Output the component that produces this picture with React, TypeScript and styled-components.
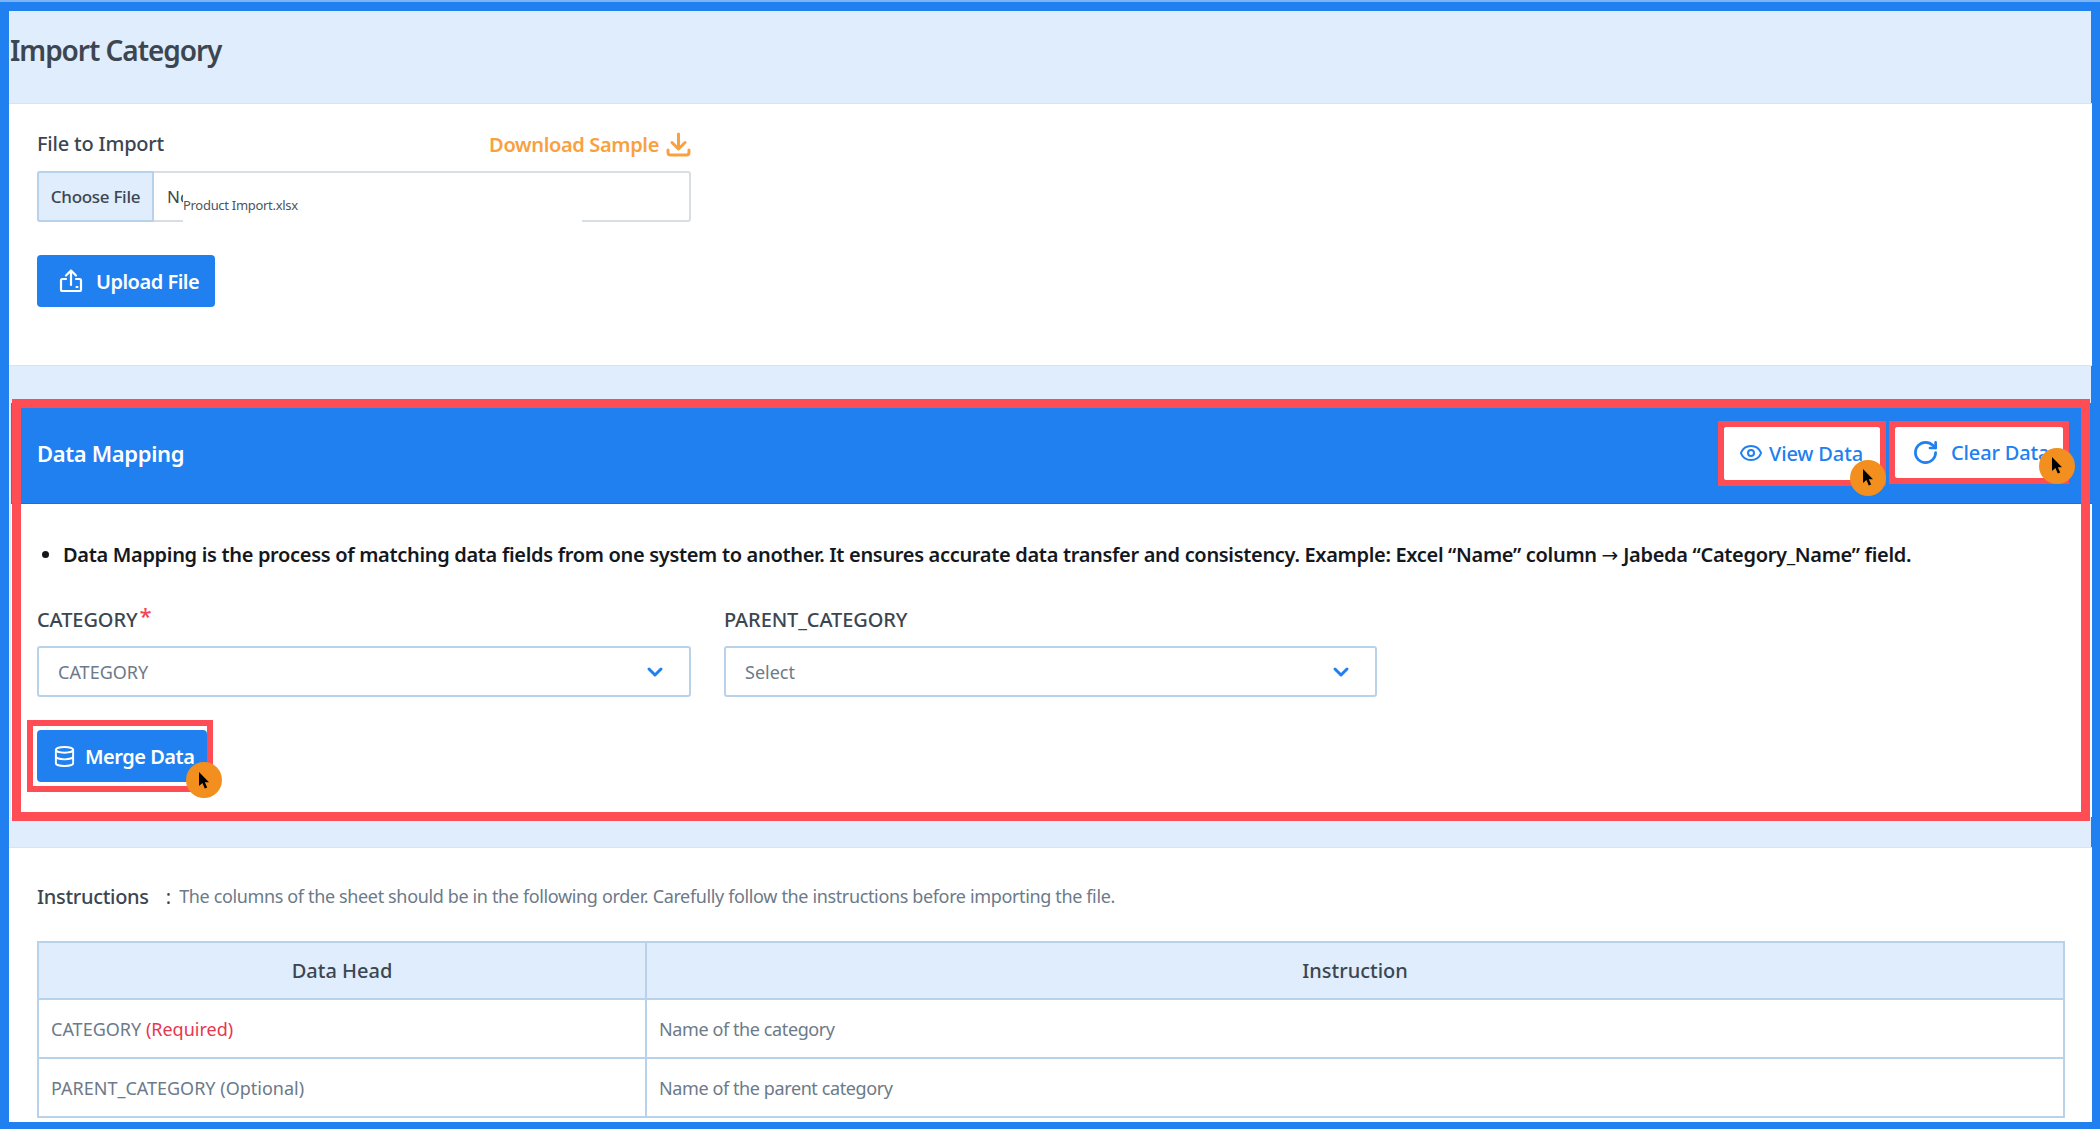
import React from 'react';
import styled, { createGlobalStyle } from 'styled-components';
import { ChevronDown, Database, Eye, RotateCw } from 'lucide-react';

const GlobalStyle = createGlobalStyle`
  html, body {
    margin: 0;
    padding: 0;
    background: #2080f0;
  }
  * {
    box-sizing: border-box;
  }
  body {
    font-family: "Noto Sans", "Open Sans", sans-serif;
    color: #3c4651;
  }
`;

const palette = {
  blue: '#2080f0',
  pale: '#e0edfc',
  ink: '#3c4651',
  muted: '#6c7a89',
  line: '#b9d2ec',
  grey: '#d8dee6',
  red: '#ff4d55',
  orange: '#f28f1f',
  amber: '#f9a03f',
};

const Frame = styled.div`
  width: 2100px;
  height: 1129px;
  overflow: hidden;
  background: ${palette.blue};
  border-top: 2px solid #7db4f6;
  padding: 9px 9px 7px;
`;

const Page = styled.main`
  height: 1111px;
  background: ${palette.pale};
  display: flex;
  flex-direction: column;
`;

const PageHeader = styled.header`
  height: 92px;
  flex: none;
  display: flex;
  align-items: center;
  padding: 0 0 14px 1px;
`;

const Title = styled.h1`
  margin: 0;
  font-size: 28px;
  line-height: 36px;
  font-weight: 600;
  letter-spacing: -1.05px;
  color: ${palette.ink};
`;

const Card = styled.section`
  flex: none;
  background: #fff;
  border-top: 1px solid #dce3ea;
  border-bottom: 1px solid #dce3ea;
  margin-right: -1px;
  padding: 24px 28px 58px;
`;

const InstructionsCard = styled(Card)`
  margin-top: 30px;
  padding: 33px 28px 0;
  border-bottom: none;
  flex: 1;
`;

const Narrow = styled.div`
  width: 654px;
`;

const LabelRow = styled.div`
  display: flex;
  justify-content: space-between;
  align-items: center;
  height: 32px;
  margin-bottom: 11px;
`;

const FieldLabel = styled.label`
  display: block;
  font-size: 20px;
  line-height: 28px;
  font-weight: 500;
  letter-spacing: -0.1px;
  color: ${palette.ink};
  margin-bottom: 12px;
`;

const PlainLabel = styled(FieldLabel)`
  margin: 0;
  letter-spacing: -0.2px;
`;

const RequiredMark = styled.span`
  color: #f0455a;
  font-size: 22px;
  line-height: 0;
  margin-left: 2px;
  vertical-align: 3px;
`;

const DownloadLink = styled.a`
  display: flex;
  align-items: center;
  gap: 7px;
  font-size: 20px;
  font-weight: 600;
  letter-spacing: -0.35px;
  color: ${palette.amber};
`;

const FileBox = styled.div`
  position: relative;
  display: flex;
  align-items: center;
  height: 51px;
  border: 2px solid ${palette.grey};
  border-radius: 3px;
  background: #fff;
  font-size: 17px;
  color: ${palette.ink};
`;

const ChooseFile = styled.span`
  align-self: stretch;
  width: 117px;
  margin: -2px 0 -2px -2px;
  display: flex;
  align-items: center;
  justify-content: center;
  background: ${palette.pale};
  border: 2px solid ${palette.line};
  border-radius: 3px 0 0 3px;
  font-weight: 500;
  letter-spacing: -0.3px;
`;

const NoFile = styled.span`
  margin-left: 13px;
`;

const FilePatch = styled.span`
  position: absolute;
  top: 0;
  bottom: -2px;
  left: 144px;
  right: 107px;
  background: #fff;
  display: flex;
  align-items: center;
  padding-top: 14px;
  font-size: 13px;
  letter-spacing: -0.3px;
  color: #4a5560;
`;

const PrimaryButton = styled.button<{ $width: number; $gap: number; $pad: number }>`
  position: relative;
  display: flex;
  align-items: center;
  gap: ${(props) => props.$gap}px;
  width: ${(props) => props.$width}px;
  height: 52px;
  margin-top: 33px;
  padding: 0 0 0 ${(props) => props.$pad}px;
  border: none;
  border-radius: 4px;
  background: ${palette.blue};
  color: #fff;
  font-family: inherit;
  font-size: 20px;
  font-weight: 600;
  letter-spacing: -0.5px;
`;

const MappingCard = styled.section`
  position: relative;
  flex: none;
  margin: 37px -1px 0 2px;
  background: #fff;
`;

const MappingHeader = styled.div`
  height: 101px;
  background: ${palette.blue};
  display: flex;
  align-items: center;
  justify-content: space-between;
  padding: 0 29px 0 26px;
  border-bottom: 1px solid #1a6fd6;
`;

const MappingTitle = styled.h2`
  margin: 0;
  color: #fff;
  font-size: 22px;
  font-weight: 600;
  letter-spacing: -0.35px;
`;

const HeaderActions = styled.div`
  display: flex;
  align-items: flex-start;
  gap: 15px;
`;

const ActionButton = styled.button<{ $width: number; $height: number; $gap: number; $pad: number }>`
  position: relative;
  display: flex;
  align-items: center;
  gap: ${(props) => props.$gap}px;
  width: ${(props) => props.$width}px;
  height: ${(props) => props.$height}px;
  padding: 0 0 0 ${(props) => props.$pad}px;
  border: none;
  border-radius: 2px;
  background: #fff;
  color: ${palette.blue};
  font-family: inherit;
  font-size: 20px;
  font-weight: 500;
  letter-spacing: -0.15px;
  white-space: nowrap;
`;

const MappingBody = styled.div`
  padding: 36px 0 35px 26px;
`;

const NoteList = styled.ul`
  margin: 0 0 36px;
  padding: 0 0 0 26px;
`;

const Note = styled.li`
  font-size: 20px;
  line-height: 30px;
  font-weight: 600;
  letter-spacing: -0.32px;
  color: #14181d;
  white-space: nowrap;
`;

const NoteArrow = styled.span`
  font-family: "DejaVu Sans", sans-serif;
  font-weight: 400;
  letter-spacing: 0;
`;

const FieldGrid = styled.div`
  display: grid;
  grid-template-columns: 654px 653px;
  gap: 33px;
`;

const Select = styled.div`
  height: 51px;
  display: flex;
  align-items: center;
  justify-content: space-between;
  padding: 0 22px 0 19px;
  border: 2px solid ${palette.line};
  border-radius: 3px;
  font-size: 18px;
  color: ${palette.muted};
`;

const Highlight = styled.span<{ $inset: string; $size: number }>`
  position: absolute;
  inset: ${(props) => props.$inset};
  border: ${(props) => props.$size}px solid ${palette.red};
  pointer-events: none;
`;

const Badge = styled.span<{ $right: number; $bottom: number }>`
  position: absolute;
  right: ${(props) => props.$right}px;
  bottom: ${(props) => props.$bottom}px;
  width: 36px;
  height: 36px;
  border-radius: 50%;
  background: ${palette.orange};
  display: flex;
  align-items: center;
  justify-content: center;
  z-index: 2;
`;

const InstructionRow = styled.div`
  display: flex;
  align-items: center;
  height: 30px;
`;

const InstructionHead = styled.span`
  font-size: 20px;
  font-weight: 500;
  letter-spacing: -0.3px;
  color: ${palette.ink};
`;

const Colon = styled.span`
  margin: 0 8px 0 17px;
  font-size: 20px;
  color: ${palette.ink};
`;

const InstructionText = styled.span`
  font-size: 18px;
  letter-spacing: -0.36px;
  color: ${palette.muted};
`;

const Table = styled.table`
  width: 2026px;
  margin-top: 30px;
  border-collapse: collapse;
  table-layout: fixed;
`;

const HeadCell = styled.th`
  height: 57px;
  background: ${palette.pale};
  border: 2px solid ${palette.line};
  font-size: 20px;
  font-weight: 500;
  color: ${palette.ink};
`;

const Cell = styled.td`
  height: 59px;
  padding: 0 12px;
  border: 2px solid ${palette.line};
  font-size: 18px;
  color: ${palette.muted};
`;

const NameCell = styled(Cell)`
  letter-spacing: -0.4px;
`;

const RequiredText = styled.span`
  color: #e8364f;
`;

function Cursor() {
  return (
    <svg width="12" height="17" viewBox="0 0 12 17">
      <path d="M1 0v14l3.4-3 2.4 5.600 2.400-1-2.400-5.400H11z" fill="#000" />
    </svg>
  );
}

function UploadIcon() {
  return (
    <svg width="26" height="26" viewBox="0 0 26 26" fill="none" stroke="#fff" strokeWidth="2.2" strokeLinecap="round" strokeLinejoin="round">
      <path d="M8 11H4.500A1.500 1.500 0 0 0 3 12.500v9A1.500 1.500 0 0 0 4.500 23h17a1.500 1.500 0 0 0 1.500-1.500v-9a1.500 1.500 0 0 0-1.500-1.500H18" />
      <path d="M13 17V2.500M8 7.500l5-5 5 5M18.500 19h1" />
    </svg>
  );
}

function DownloadIcon() {
  return (
    <svg width="25" height="25" viewBox="0 0 25 25" fill="none" stroke={palette.amber} strokeWidth="3" strokeLinecap="round" strokeLinejoin="round">
      <path d="M2 18v2.500A2.500 2.500 0 0 0 4.500 23h16a2.500 2.500 0 0 0 2.500-2.500V18" />
      <path d="M12.500 2v14.500M6 10.500l6.500 6.500 6.500-6.500" />
    </svg>
  );
}

export default function App() {
  return (
    <>
      <GlobalStyle />
      <Frame>
        <Page>
          <PageHeader>
            <Title>Import Category</Title>
          </PageHeader>

          <Card>
            <Narrow>
              <LabelRow>
                <PlainLabel>File to Import</PlainLabel>
                <DownloadLink>
                  Download Sample
                  <DownloadIcon />
                </DownloadLink>
              </LabelRow>
              <FileBox>
                <ChooseFile>Choose File</ChooseFile>
                <NoFile>No file chosen</NoFile>
                <FilePatch>Product Import.xlsx</FilePatch>
              </FileBox>
            </Narrow>
            <PrimaryButton $width={178} $gap={12} $pad={21}>
              <UploadIcon />
              Upload File
            </PrimaryButton>
          </Card>

          <MappingCard>
            <MappingHeader>
              <MappingTitle>Data Mapping</MappingTitle>
              <HeaderActions>
                <ActionButton $width={156} $height={53} $gap={6} $pad={15}>
                  <Eye size={24} strokeWidth={2} />
                  View Data
                  <Highlight $inset="-6px" $size={6} />
                  <Badge $right={-6} $bottom={-16}>
                    <Cursor />
                  </Badge>
                </ActionButton>
                <ActionButton $width={168} $height={51} $gap={12} $pad={17}>
                  <RotateCw size={27} strokeWidth={2.4} />
                  Clear Data
                  <Highlight $inset="-6px" $size={6} />
                  <Badge $right={-12} $bottom={-6}>
                    <Cursor />
                  </Badge>
                </ActionButton>
              </HeaderActions>
            </MappingHeader>

            <MappingBody>
              <NoteList>
                <Note>
                  Data Mapping is the process of matching data fields from one system to another. It ensures accurate data transfer and consistency. Example: Excel “Name” column <NoteArrow>→</NoteArrow> Jabeda “Category_Name” field.
                </Note>
              </NoteList>
              <FieldGrid>
                <div>
                  <FieldLabel>
                    CATEGORY<RequiredMark>*</RequiredMark>
                  </FieldLabel>
                  <Select>
                    CATEGORY
                    <ChevronDown size={24} strokeWidth={3} color={palette.blue} />
                  </Select>
                </div>
                <div>
                  <FieldLabel>PARENT_CATEGORY</FieldLabel>
                  <Select>
                    Select
                    <ChevronDown size={24} strokeWidth={3} color={palette.blue} />
                  </Select>
                </div>
              </FieldGrid>
              <PrimaryButton $width={170} $gap={9} $pad={16}>
                <Database size={23} strokeWidth={2} />
                Merge Data
                <Highlight $inset="-10px -6px -10px -10px" $size={6} />
                <Badge $right={-15} $bottom={-16}>
                  <Cursor />
                </Badge>
              </PrimaryButton>
            </MappingBody>
            <Highlight $inset="-4px 2px -4px 1px" $size={9} />
          </MappingCard>

          <InstructionsCard>
            <InstructionRow>
              <InstructionHead>Instructions</InstructionHead>
              <Colon>:</Colon>
              <InstructionText>
                The columns of the sheet should be in the following order. Carefully follow the instructions before importing the file.
              </InstructionText>
            </InstructionRow>
            <Table>
              <colgroup>
                <col width="608" />
                <col width="1418" />
              </colgroup>
              <thead>
                <tr>
                  <HeadCell>Data Head</HeadCell>
                  <HeadCell>Instruction</HeadCell>
                </tr>
              </thead>
              <tbody>
                <tr>
                  <Cell>
                    CATEGORY <RequiredText>(Required)</RequiredText>
                  </Cell>
                  <NameCell>Name of the category</NameCell>
                </tr>
                <tr>
                  <Cell>PARENT_CATEGORY (Optional)</Cell>
                  <NameCell>Name of the parent category</NameCell>
                </tr>
              </tbody>
            </Table>
          </InstructionsCard>
        </Page>
      </Frame>
    </>
  );
}
